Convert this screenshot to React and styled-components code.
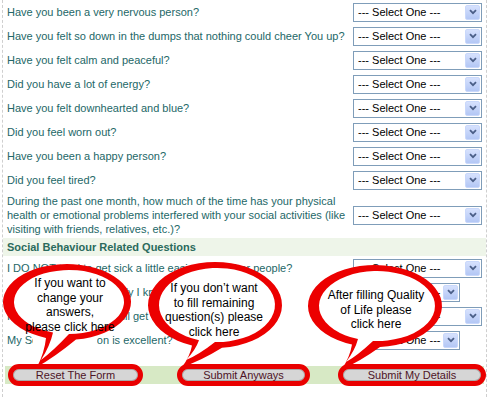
import React from "react";
import styled, { createGlobalStyle } from "styled-components";

const GlobalStyle = createGlobalStyle`
  html, body {
    margin: 0;
    padding: 0;
    background: #fff;
  }
  body {
    font-family: "Liberation Sans", Arial, sans-serif;
  }
`;

const Page = styled.div`
  position: relative;
  width: 490px;
  height: 397px;
  overflow: hidden;
  background: #fff;
`;

const Frame = styled.div`
  margin-left: 2px;
  width: 483px;
  height: 397px;
  border-left: 1px dashed #cfcfcf;
  border-right: 1px dashed #cfcfcf;
`;

const Row = styled.div`
  display: grid;
  grid-template-columns: 350px 1fr;
  align-items: center;
  min-height: 24px;
`;

const Question = styled.div`
  padding: ${(p) => (p.$multi ? "2px 4px" : "0 4px")};
  font-size: 11px;
  line-height: 14px;
  color: #236767;
  white-space: ${(p) => (p.$multi ? "normal" : "nowrap")};
`;

const SelectBox = styled.div`
  display: flex;
  width: ${(p) => (p.$narrow ? 107 : 129)}px;
  height: 19px;
  box-sizing: border-box;
  border: 1px solid #7f9db9;
  background: #fff;
`;

const NativeSelect = styled.select`
  appearance: none;
  flex: 1;
  min-width: 0;
  border: 0;
  outline: none;
  background: transparent;
  padding: 0 0 0 4px;
  font: 11px "Liberation Sans", Arial, sans-serif;
  color: #000;
`;

const Arrow = styled.span`
  flex: none;
  width: 15px;
  margin: 1px;
  box-sizing: border-box;
  border: 1px solid #c9d8fb;
  border-radius: 2px;
  background: linear-gradient(#d6e1fd, #b3c7f5);
  display: flex;
  align-items: center;
  justify-content: center;
`;

const SectionHeader = styled.div`
  height: 18px;
  line-height: 18px;
  padding-left: 4px;
  background: #eef5e9;
  font-size: 11px;
  font-weight: bold;
  color: #2a6a5c;
`;

const ButtonBar = styled.div`
  display: flex;
  align-items: center;
  height: 18px;
  margin: 14px 2px 0;
  background: #d7e9c5;
`;

const FormButton = styled.button`
  flex: none;
  box-sizing: border-box;
  width: ${(p) => p.$w}px;
  height: 22px;
  margin-left: ${(p) => p.$ml}px;
  padding: 0;
  border: 5px solid #e90000;
  border-radius: 11px;
  background: #d6d6d6;
  box-shadow: inset 0 0 0 1px #a8a8a8;
  font: 11px/12px "Liberation Sans", Arial, sans-serif;
  color: #4e1426;
`;

const Overlay = styled.div`
  position: absolute;
  inset: 0;
  pointer-events: none;
`;

const Drawing = styled.svg`
  position: absolute;
  left: 0;
  top: 0;
`;

const BubbleText = styled.div`
  position: absolute;
  left: ${(p) => p.$cx - 70}px;
  top: ${(p) => p.$top}px;
  width: 140px;
  text-align: center;
  font-size: 12px;
  line-height: 14.5px;
  color: #000;
`;

const questions = [
  "Have you been a very nervous person?",
  "Have you felt so down in the dumps that nothing could cheer You up?",
  "Have you felt calm and peaceful?",
  "Did you have a lot of energy?",
  "Have you felt downhearted and blue?",
  "Did you feel worn out?",
  "Have you been a happy person?",
  "Did you feel tired?",
];

const longQuestion =
  "During the past one month, how much of the time has your physical health or emotional problems interfered with your social activities (like visiting with friends, relatives, etc.)?";

const socialQuestions = [
  { text: "I DO NOT tend to get sick a little easier than other people?" },
  { text: "I am as social as anybody I know?", narrow: true },
  { text: "I expect my social life will get worse?" },
  { text: "My Social Interaction is excellent?", narrow: true },
];

// callouts pasted over the form, each with a white patch behind its tail
const bubbles = [
  {
    cx: 67, cy: 302, rx: 64, ry: 38,
    tail: [46, 76, 37, 367], inner: [53, 69, 41, 360],
    patch: [33, 333, 64, 22],
    textTop: 276, textX: 70,
    lines: ["If you want to", "change your", "answers,", "please click here"],
  },
  {
    cx: 215, cy: 305, rx: 67, ry: 43,
    tail: [192, 222, 182, 367], inner: [199, 215, 186, 360],
    textTop: 281, textX: 214,
    lines: ["If you don’t want", "to fill remaining", "question(s) please", "click here"],
  },
  {
    cx: 375, cy: 306, rx: 67, ry: 41,
    tail: [352, 380, 342, 369], inner: [358, 373, 346, 362],
    textTop: 288, textX: 376,
    lines: ["After filling Quality", "of Life please", "click here"],
  },
];

function bubblePath(cx, cy, rx, ry, [x1, x2, tx, ty]) {
  const yAt = (x) => cy + ry * Math.sqrt(1 - ((x - cx) / rx) ** 2);
  const y1 = yAt(x1);
  const y2 = yAt(x2);
  return `M ${x2} ${y2} Q ${(x2 + tx) / 2 - 2} ${(y2 + ty) / 2 + 4} ${tx} ${ty} Q ${(x1 + tx) / 2 + 3} ${(y1 + ty) / 2} ${x1} ${y1} A ${rx} ${ry} 0 1 1 ${x2} ${y2} Z`;
}

const Select = ({ narrow }) => (
  <SelectBox $narrow={narrow}>
    <NativeSelect defaultValue="">
      <option value="">--- Select One ---</option>
    </NativeSelect>
    <Arrow>
      <svg width="8" height="6" viewBox="0 0 8 6">
        <path d="M1 1.2 L4 4.2 L7 1.2" fill="none" stroke="#4b5f88" strokeWidth="1.8" />
      </svg>
    </Arrow>
  </SelectBox>
);

export default function App() {
  return (
    <Page>
      <GlobalStyle />
      <Frame>
        {questions.map((q) => (
          <Row key={q}>
            <Question>{q}</Question>
            <Select />
          </Row>
        ))}
        <Row>
          <Question $multi>{longQuestion}</Question>
          <Select />
        </Row>
        <SectionHeader>Social Behaviour Related Questions</SectionHeader>
        {socialQuestions.map((q) => (
          <Row key={q.text}>
            <Question>{q.text}</Question>
            <Select narrow={q.narrow} />
          </Row>
        ))}
        <ButtonBar>
          <FormButton type="reset" $w={135} $ml={3}>Reset The Form</FormButton>
          <FormButton type="button" $w={133} $ml={34}>Submit Anyways</FormButton>
          <FormButton type="submit" $w={148} $ml={28}>Submit My Details</FormButton>
        </ButtonBar>
      </Frame>
      <Overlay>
        <Drawing width="490" height="397" viewBox="0 0 490 397">
          {bubbles.map((b, i) => (
            <g key={i}>
              {b.patch && (
                <rect x={b.patch[0]} y={b.patch[1]} width={b.patch[2]} height={b.patch[3]} fill="#fff" />
              )}
              <path d={bubblePath(b.cx, b.cy, b.rx, b.ry, b.tail)} fill="#ec0000" />
              <path d={bubblePath(b.cx + 2, b.cy, b.rx - 9, b.ry - 6, b.inner)} fill="#fff" />
            </g>
          ))}
        </Drawing>
        {bubbles.map((b, i) => (
          <BubbleText key={i} $cx={b.textX} $top={b.textTop}>
            {b.lines.map((l) => (
              <div key={l}>{l}</div>
            ))}
          </BubbleText>
        ))}
      </Overlay>
    </Page>
  );
}
